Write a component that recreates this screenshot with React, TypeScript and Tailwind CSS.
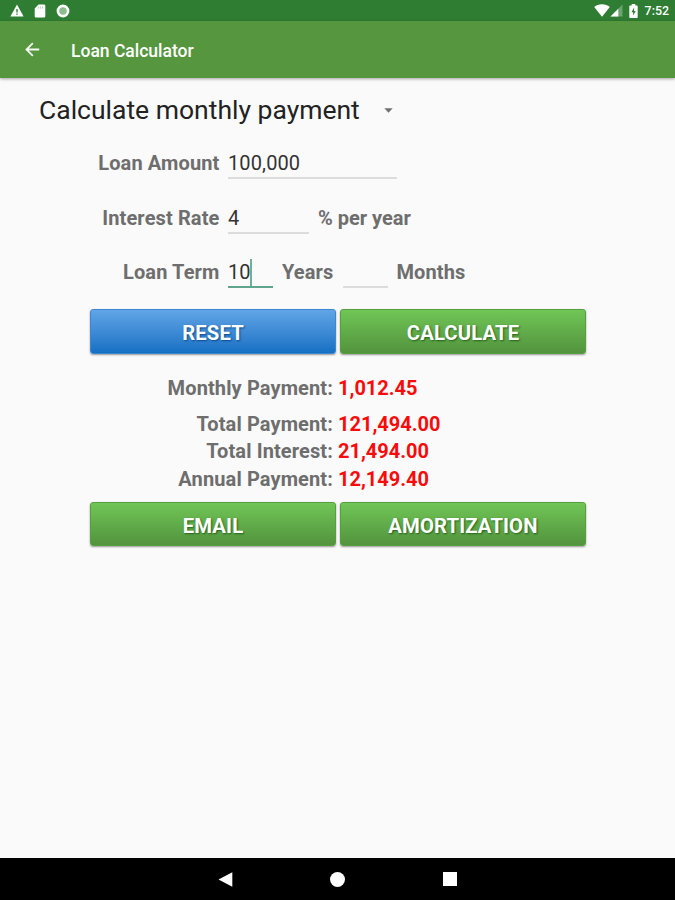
import type { ReactNode } from "react";

function StatusBar() {
  return (
    <div className="flex h-[21px] items-center justify-between bg-[#2e7d32] text-white">
      <div className="flex items-center pl-[10px]">
        <svg width="14" height="13" viewBox="0 0 14 13">
          <path d="M7 0.5 13.6 12.5H0.4Z" fill="#fff" />
          <path d="M6.3 5h1.4v3.4H6.3zM6.3 9.4h1.4v1.4H6.3z" fill="#2e7d32" />
        </svg>
        <svg className="ml-[10px]" width="12" height="14" viewBox="0 0 12 14">
          <path d="M4.5 0.5H10a1.3 1.3 0 0 1 1.3 1.3v10.4A1.3 1.3 0 0 1 10 13.5H2a1.3 1.3 0 0 1-1.3-1.3V4.5Z" fill="#fff" />
          <path d="M4.3 2.4v2.2M6.4 2.4v2.2M8.5 2.4v2.2" stroke="#a9cdab" strokeWidth="0.9" />
        </svg>
        <svg className="ml-[10px]" width="14" height="14" viewBox="0 0 14 14">
          <circle cx="7" cy="7" r="5.1" fill="#8dbd8f" stroke="#fff" strokeWidth="2.6" />
        </svg>
      </div>
      <div className="flex items-center pr-[6px]">
        <svg width="16" height="13" viewBox="0 0 16 13">
          <path d="M8 12.8 0.2 3.1C2.3 1.3 5 0.3 8 0.3s5.7 1 7.8 2.8Z" fill="#fff" />
        </svg>
        <svg width="13" height="13" viewBox="0 0 13 13">
          <path d="M12.5 0.5v12H0.5Z" fill="#6ba36e" />
          <path d="M8.3 4.7v7.8H0.5Z" fill="#fff" />
        </svg>
        <svg className="ml-[6px]" width="9" height="14" viewBox="0 0 9 14">
          <path d="M2.7 0h3.6v1.4h1.4c.6 0 1 .4 1 1V13c0 .6-.4 1-1 1H1.3c-.6 0-1-.4-1-1V2.4c0-.6.4-1 1-1h1.4Z" fill="#fff" />
          <path d="M5.1 3.6 2.5 8.2h1.7v3.4L6.7 7H5.1Z" fill="#2e7d32" />
        </svg>
        <span className="ml-[7px] pt-[2px] text-[12.4px] font-medium leading-none">7:52</span>
      </div>
    </div>
  );
}

function Toolbar() {
  return (
    <header className="relative flex h-[57px] items-center bg-[#55963f] pl-[25px] shadow-[0_1px_3px_rgba(0,0,0,0.35)]">
      <svg width="15" height="15" viewBox="0 0 15 15" fill="none" stroke="#f4f9f2" strokeWidth="1.8">
        <path d="M14.2 7.5H2M7.8 1.2 1.5 7.5l6.3 6.3" />
      </svg>
      <h1 className="ml-[31px] pt-[4px] text-[17.5px] font-medium text-white">Loan Calculator</h1>
    </header>
  );
}

function FormRow({ label, children }: { label: string; children: ReactNode }) {
  return (
    <div className="flex h-[54.5px] items-center">
      <span className="w-[219.5px] text-right">{label}</span>
      <div className="ml-[8.5px] flex items-center">{children}</div>
    </div>
  );
}

type FieldProps = { value: string; className: string; focused?: boolean };

function Field({ value, className, focused }: FieldProps) {
  return (
    <div
      className={`flex h-[32px] items-center border-b-2 pt-[2px] font-normal text-[#333] ${className} ${
        focused ? "border-[#5fa58e]" : "border-[#dcdcdc]"
      }`}
    >
      {value}
      {focused && <span className="-ml-px h-[27px] w-[2px] bg-[#6fb09b]" />}
    </div>
  );
}

function Button({ label, blue }: { label: string; blue?: boolean }) {
  return (
    <button
      className={`h-[44.5px] w-[246px] rounded-[3px] border pt-[3px] text-[20.3px] font-bold text-white shadow-[0_1px_2px_rgba(0,0,0,0.4)] ${
        blue
          ? "border-[#3b88d0] bg-linear-to-b from-[#60a5e6] to-[#1470c4] [text-shadow:1px_1px_2px_#0b4a8a]"
          : "border-[#559f3f] bg-linear-to-b from-[#70c656] to-[#53933e] [text-shadow:1px_1px_2px_#23611a]"
      }`}
    >
      {label}
    </button>
  );
}

function ResultRow({ label, value }: { label: string; value: string }) {
  return (
    <div className="flex h-[27.25px] items-center">
      <span className="w-[333px] text-right">{label}</span>
      <span className="ml-[5px] tracking-normal text-[#f80b0b]">{value}</span>
    </div>
  );
}

export default function App() {
  return (
    <div className="flex h-[900px] w-[675px] flex-col overflow-hidden bg-[#fafafa] font-[Roboto,sans-serif]">
      <StatusBar />
      <Toolbar />
      <main className="flex-1 text-[20px] font-bold tracking-[0.12px] text-[#6e6e6e]">
        <div className="mt-[10px] flex h-[44px] items-center pl-[39px] text-[26.5px] font-normal tracking-normal text-[#222]">
          Calculate monthly payment
          <svg className="ml-[24px]" width="9" height="5" viewBox="0 0 9 5">
            <path d="M0.3 0.3h8.4L4.5 4.7Z" fill="#707070" />
          </svg>
        </div>
        <div className="mt-[4px]">
          <FormRow label="Loan Amount">
            <Field value="100,000" className="w-[169px]" />
          </FormRow>
          <FormRow label="Interest Rate">
            <Field value="4" className="w-[81px]" />
            <span className="ml-[9px] tracking-normal">% per year</span>
          </FormRow>
          <FormRow label="Loan Term">
            <Field value="10" className="w-[45px]" focused />
            <span className="ml-[9px]">Years</span>
            <Field value="" className="ml-[10px] w-[45px]" />
            <span className="ml-[8px]">Months</span>
          </FormRow>
        </div>
        <div className="mt-[9.5px] flex gap-1 pl-[90px]">
          <Button label="RESET" blue />
          <Button label="CALCULATE" />
        </div>
        <div className="mt-[21px]">
          <ResultRow label="Monthly Payment:" value="1,012.45" />
          <div className="mt-[8.7px]">
            <ResultRow label="Total Payment:" value="121,494.00" />
            <ResultRow label="Total Interest:" value="21,494.00" />
            <ResultRow label="Annual Payment:" value="12,149.40" />
          </div>
        </div>
        <div className="mt-[9.8px] flex gap-1 pl-[90px]">
          <Button label="EMAIL" />
          <Button label="AMORTIZATION" />
        </div>
      </main>
      <nav className="flex h-[42px] items-center bg-black pl-[218px]">
        <svg width="15" height="15" viewBox="0 0 15 15">
          <path d="M0.5 7.5 14.3 0.3v14.4Z" fill="#fff" />
        </svg>
        <div className="ml-[97px] size-[15px] rounded-full bg-white" />
        <div className="ml-[98px] size-[14px] bg-white" />
      </nav>
    </div>
  );
}
